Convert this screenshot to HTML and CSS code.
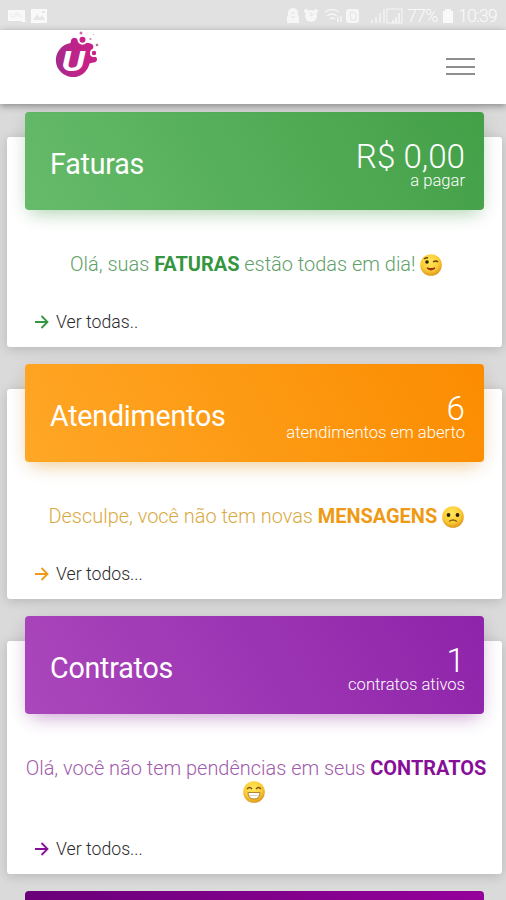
FILE: index.html
```html
<!DOCTYPE html>
<html lang="pt-BR">
<head>
<meta charset="utf-8">
<title>Início</title>
<link rel="stylesheet" href="styles.css">
</head>
<body>
<div class="status">
  <svg class="status-left" width="42" height="18" viewBox="0 0 42 18">
    <path fill="#f9f9f9" d="M0 3h17v10l1 2h-4l-1-1H0z"/><path stroke="#ececec" fill="none" d="M3 6v4h3V6M8 10V6h2v4M12 6v4h3"/>
    <rect x="23" y="2" width="16" height="14" fill="#f9f9f9"/><path fill="#e6e6e6" d="M25 13l4-6 3 4 2-3 3 5zM34 4h3v2h-3z"/>
  </svg>
  <div class="status-right">
    <svg width="120" height="18" viewBox="0 0 120 18">
      <g fill="#f6f6f6">
        <path d="M1 5q1-4 5-4t5 4v3l1 2v6H0v-6l1-2z"/>
        <circle cx="24" cy="9" r="6"/><circle cx="19" cy="4" r="2"/><circle cx="29" cy="4" r="2"/>
        <rect x="59" y="2" width="13" height="14" rx="3"/>
        <path d="M84 13h2v3h-2zM88 10h2v6h-2zM92 6h2v10h-2zM96 2h2v14h-2z" opacity=".65"/>
        <path d="M105 13h2v3h-2zM108 10h2v6h-2zM111 6h2v10h-2z" opacity=".8"/>
      </g>
      <g fill="none" stroke="#f6f6f6" stroke-width="1.5">
        <path d="M38 5q7-5 14 0M40 9q5-4 10 0M43 12q2-2 5 0M51 10v5M54 15V9"/>
        <rect x="100" y="2" width="15" height="14" stroke-width="1"/>
      </g>
      <path d="M24 5v4l3-2M4 6h4M4 10h4M63 5h4l2 3v5h-5z" fill="none" stroke="#e2e2e2"/>
    </svg>
    <span class="pct">77%</span>
    <svg width="12" height="16" viewBox="0 0 12 16"><path fill="#f9f9f9" d="M3 1h6v2h2v12H1V3h2z"/></svg>
    <span class="time">10:39</span>
  </div>
</div>
<header class="nav">
  <svg class="logo" width="44" height="50" viewBox="0 0 44 50">
    <defs><linearGradient id="brand" x1="0" x2="1"><stop offset="0" stop-color="#a42a8c"/><stop offset=".45" stop-color="#bd2388"/><stop offset="1" stop-color="#cb2188"/></linearGradient></defs>
    <g fill="url(#brand)">
      <path d="M15 10.500C16 7 20 7 22 10L25 14C28 12.500 32 12.500 34.500 13.500C37 14 38 16 37 18.500C34 21 34 24 35 26C37 27 39 26 40.500 27.500C42 30 40 33 37 32.500L33.500 33.500A17 17 0 1 1 14 13.300Q15 12.500 15 10.500Z"/>
    </g>
    <circle cx="26.500" cy="9.800" r="4" fill="#cb2188" stroke="#fff" stroke-width="2"/>
    <circle cx="38" cy="23" r="3.100" fill="#cb2188" stroke="#fff" stroke-width="1.800"/>
    <circle cx="25" cy="3" r="1.500" fill="#d46aa9"/><circle cx="34.500" cy="9" r="1.100" fill="#c882b0"/><circle cx="41" cy="15" r="1.300" fill="#b07398"/><circle cx="37.500" cy="4.500" r=".8" fill="#f0bfdc"/>
    <text class="logo-u" x="5.500" y="40.500" textLength="23.500" lengthAdjust="spacingAndGlyphs">U</text>
  </svg>
  <div class="burger"><i></i><i></i><i></i></div>
</header>
<main>
  <section class="card green">
    <div class="head"><h2>Faturas</h2><div class="sum"><b class="amount">R$ 0,00</b><span>a pagar</span></div></div>
    <p>Olá, suas <strong>FATURAS</strong> estão todas em dia!
      <svg class="emoji" viewBox="0 0 22 22"><use href="#face"/><circle cx="7" cy="8" r="1.800" fill="#30210b"/><path d="M4 5q2-2 4-1M13 8q3-2 5 0M7 14q4 2 8 0" fill="none" stroke="#654208" stroke-width="1.500"/><path d="M7 14q4 5 8 0z" fill="#a32e15"/></svg></p>
    <a><svg class="arrow" viewBox="0 0 14 14"><path d="M0 7h12.500M6.500 1l6 6-6 6"/></svg><span>Ver todas..</span></a>
  </section>
  <section class="card orange">
    <div class="head"><h2>Atendimentos</h2><div class="sum"><b>6</b><span>atendimentos em aberto</span></div></div>
    <p>Desculpe, você não tem novas <strong>MENSAGENS</strong>
      <svg class="emoji" viewBox="0 0 22 22"><use href="#face"/><circle cx="6.500" cy="9" r="1.900" fill="#30210b"/><circle cx="15.500" cy="9" r="1.900" fill="#30210b"/><path d="M7 15.500q4-3 8 0" fill="none" stroke="#8d5c14" stroke-width="1.300"/></svg></p>
    <a><svg class="arrow" viewBox="0 0 14 14"><path d="M0 7h12.500M6.500 1l6 6-6 6"/></svg><span>Ver todos...</span></a>
  </section>
  <section class="card purple">
    <div class="head"><h2>Contratos</h2><div class="sum"><b>1</b><span>contratos ativos</span></div></div>
    <p>Olá, você não tem pendências em seus <strong>CONTRATOS</strong><br>
      <svg class="emoji" viewBox="0 0 22 22"><use href="#face"/><path d="M4 8q2.500-3 5 0M13 8q2.500-3 5 0" fill="none" stroke="#79500d" stroke-width="1.300"/><path d="M5 11.500h12q0 6.500-6 6.500t-6-6.500z" fill="#fff" stroke="#a87828" stroke-width=".9"/><path d="M6 14.500h10" stroke="#c8b38c" stroke-width=".6"/></svg></p>
    <a><svg class="arrow" viewBox="0 0 14 14"><path d="M0 7h12.500M6.500 1l6 6-6 6"/></svg><span>Ver todos...</span></a>
  </section>
  <section class="last plum"><div class="head"></div></section>
</main>
<svg class="defs" width="0" height="0">
  <defs>
    <radialGradient id="skin" cx=".45" cy=".35" r=".65"><stop offset="0" stop-color="#ffe85c"/><stop offset=".65" stop-color="#fbcb34"/><stop offset="1" stop-color="#dc961c"/></radialGradient>
    <circle id="face" cx="11" cy="11" r="10.800" fill="url(#skin)"/>
  </defs>
</svg>
</body>
</html>
```
FILE: styles.css
```css
* { box-sizing: border-box; }
body { margin: 0; height: 900px; overflow: hidden; background: #dadada; font-family: Roboto, "Liberation Sans", sans-serif; font-weight: 300; }
.status { height: 30px; background: #e1e1e1; display: flex; justify-content: space-between; align-items: center; padding: 1px 9px 0 8px; color: #fafafa; font-size: 18px; }
.status-right { display: flex; align-items: center; }
.status-right svg { flex: none; }
.pct { margin: 0 6px 0 0; width: 29px; letter-spacing: -1px; white-space: nowrap; }
.time { margin: 0 0 0 4px; width: 39px; letter-spacing: -1px; white-space: nowrap; }
.nav { position: relative; height: 74px; background: #fff; display: flex; justify-content: space-between; align-items: flex-start; padding: 0 30px 0 56px; box-shadow: 0 2px 7px rgba(0,0,0,.38); }
.logo { overflow: visible; }
.logo-u { font: italic 700 27px Roboto, sans-serif; fill: #fff; }
.burger { width: 29px; margin: 28px 1px 0 0; display: grid; gap: 5.500px; }
.burger i { height: 2px; background: #8e8e8e; }
main { height: 796px; overflow: hidden; padding: 33px 4.500px 0 7px; }
.card { height: 210px; margin-bottom: 42px; border-radius: 3px; background: #fff; box-shadow: 0 2px 12px rgba(0,0,0,.17); padding: 0 18px; display: flex; flex-direction: column; }
.last { padding: 0 18px; height: 25px; }
.head { height: 98px; margin-top: -25px; flex: none; border-radius: 4px; color: #fff; padding: 0 18.500px 0 25px; display: flex; justify-content: space-between; }
h2 { margin: 36px 0 0; font-size: 28.600px; font-weight: 400; line-height: 32px; letter-spacing: -.2px; }
.sum { display: flex; flex-direction: column; align-items: flex-end; padding-top: 25px; }
.sum b { font-size: 33.200px; font-weight: 300; line-height: 39px; height: 34.500px; }
.sum b + span { font-size: 16.600px; font-weight: 300; line-height: 18px; }
p { margin: 42px -20.500px 0 -16.500px; text-align: center; font-size: 19.950px; line-height: 24px; white-space: nowrap; }
strong { font-weight: 700; }
.emoji { width: 22px; height: 22px; vertical-align: -4.500px; }
.purple p { margin-right: -20px; }
.purple .emoji { margin-right: 4px; vertical-align: -4px; }
a { display: flex; align-items: center; gap: 7px; margin: auto 0 14px 10px; font-size: 17.700px; line-height: 22px; color: #2c2c2c; }
.arrow { width: 14px; height: 14px; fill: none; stroke: currentColor; stroke-width: 1.800; }
.green .head { background: linear-gradient(60deg, #66bb6a, #43a047); box-shadow: 0 8px 18px -7px rgba(76,175,80,.45), 0 4px 20px rgba(0,0,0,.07); }
.green p { color: #5fa069; }
.green strong, .green .arrow { color: #35963f; }
.orange .head { background: linear-gradient(60deg, #ffa726, #fb8c00); box-shadow: 0 8px 18px -7px rgba(255,152,0,.45), 0 4px 20px rgba(0,0,0,.07); }
.orange p { color: #dba943; }
.orange strong, .orange .arrow { color: #ee9a14; }
.purple { height: 233px; }
.purple .head { background: linear-gradient(60deg, #ab47bc, #8e24aa); box-shadow: 0 8px 18px -7px rgba(156,39,176,.45), 0 4px 20px rgba(0,0,0,.07); }
.purple p { color: #a05cab; }
.purple strong, .purple .arrow { color: #870f98; }
.plum .head { background: linear-gradient(60deg, #650075, #95009b); }
.defs { position: absolute; }
```
